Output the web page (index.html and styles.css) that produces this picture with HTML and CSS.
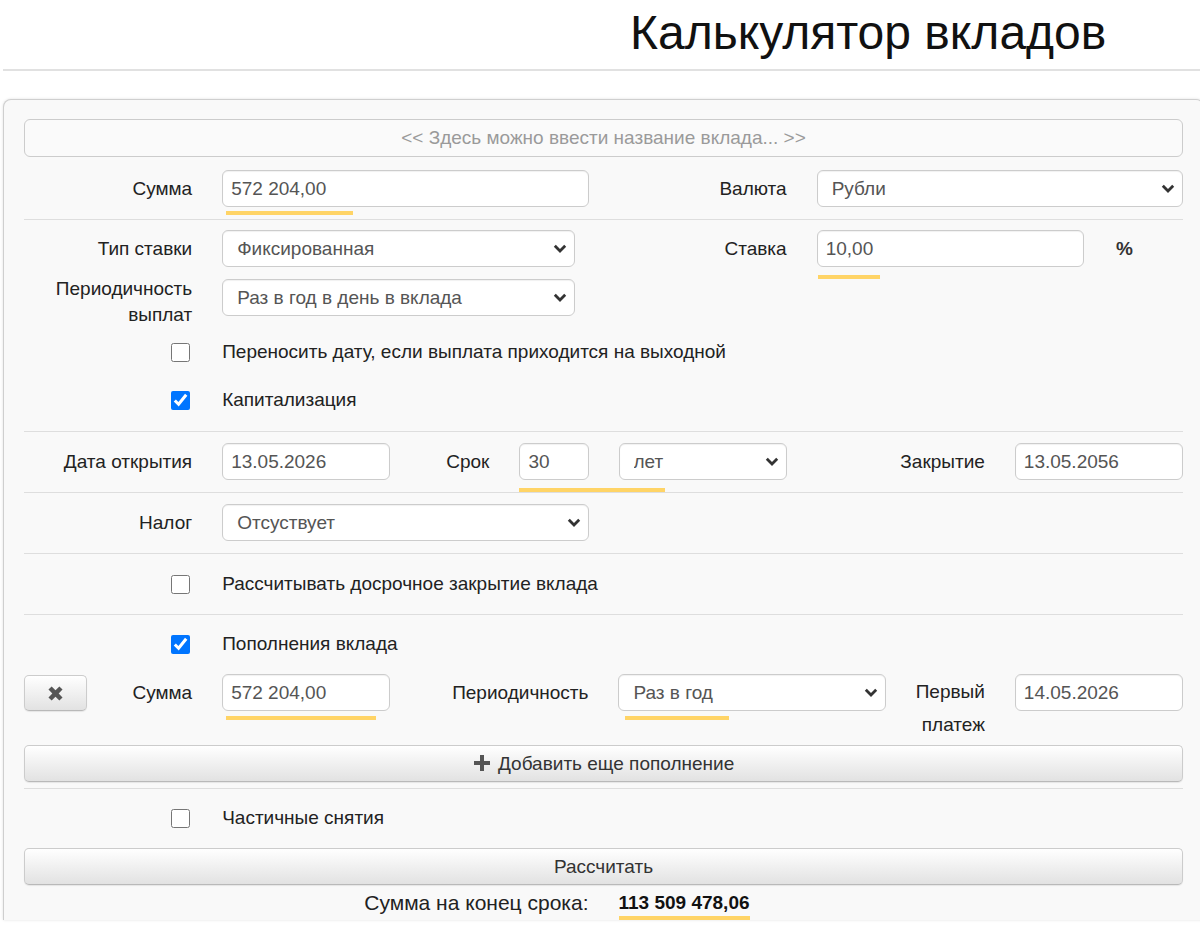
FILE: index.html
```html
<!DOCTYPE html>
<html lang="ru">
<head>
  <meta charset="UTF-8">
  <title>Калькулятор вкладов</title>
  <link rel="stylesheet" href="styles.css">
</head>
<body>
  <h1 class="page-title">Калькулятор вкладов</h1>
  <hr class="title-rule">

  <div class="panel">
    <input class="deposit-name" type="text" placeholder="<< Здесь можно ввести название вклада... >>">

    <!-- сумма и валюта -->
    <div class="section section-first">
      <div class="row">
        <label class="lbl span-2">Сумма</label>
        <div class="field span-4">
          <input class="ctrl" type="text" value="572 204,00">
          <span class="mark mark-sum"></span>
        </div>
        <label class="lbl span-2">Валюта</label>
        <div class="field span-4 select-wrap">
          <select class="ctrl"><option>Рубли</option></select>
          <svg class="chevron" viewBox="0 0 14 9"><path d="M1.8 1.8L7 7l5.2-5.2"/></svg>
        </div>
      </div>
    </div>

    <!-- ставка -->
    <div class="section section-rate">
      <div class="row">
        <label class="lbl span-2">Тип ставки</label>
        <div class="field span-4 select-wrap narrow">
          <select class="ctrl"><option>Фиксированная</option></select>
          <svg class="chevron" viewBox="0 0 14 9"><path d="M1.8 1.8L7 7l5.2-5.2"/></svg>
        </div>
        <label class="lbl span-2">Ставка</label>
        <div class="field span-3">
          <input class="ctrl" type="text" value="10,00">
          <span class="mark mark-rate"></span>
        </div>
        <div class="percent span-1">%</div>
      </div>
      <div class="row row-top row-period">
        <label class="lbl lbl-wrap span-2">Периодичность выплат</label>
        <div class="field span-4 select-wrap narrow">
          <select class="ctrl"><option>Раз в год в день в вклада</option></select>
          <svg class="chevron" viewBox="0 0 14 9"><path d="M1.8 1.8L7 7l5.2-5.2"/></svg>
        </div>
      </div>
      <div class="row check-row">
        <div class="check span-2"><input type="checkbox"></div>
        <div class="check-text span-10">Переносить дату, если выплата приходится на выходной</div>
      </div>
      <div class="row check-row">
        <div class="check span-2"><input type="checkbox" checked></div>
        <div class="check-text span-10">Капитализация</div>
      </div>
    </div>

    <!-- срок -->
    <div class="section">
      <div class="row">
        <label class="lbl span-2">Дата открытия</label>
        <div class="field span-2"><input class="ctrl" type="text" value="13.05.2026"></div>
        <label class="lbl span-1">Срок</label>
        <div class="field span-1">
          <input class="ctrl" type="text" value="30">
          <span class="mark mark-term"></span>
        </div>
        <div class="field span-2 select-wrap">
          <select class="ctrl"><option>лет</option></select>
          <svg class="chevron" viewBox="0 0 14 9"><path d="M1.8 1.8L7 7l5.2-5.2"/></svg>
        </div>
        <label class="lbl span-2">Закрытие</label>
        <div class="field span-2"><input class="ctrl" type="text" value="13.05.2056"></div>
      </div>
    </div>

    <!-- налог -->
    <div class="section">
      <div class="row">
        <label class="lbl span-2">Налог</label>
        <div class="field span-4 select-wrap">
          <select class="ctrl"><option>Отсуствует</option></select>
          <svg class="chevron" viewBox="0 0 14 9"><path d="M1.8 1.8L7 7l5.2-5.2"/></svg>
        </div>
      </div>
    </div>

    <!-- досрочное закрытие -->
    <div class="section section-check">
      <div class="row check-row check-row-tall">
        <div class="check span-2"><input type="checkbox"></div>
        <div class="check-text span-10">Рассчитывать досрочное закрытие вклада</div>
      </div>
    </div>

    <!-- пополнения -->
    <div class="section section-refill">
      <div class="row check-row check-row-head">
        <div class="check span-2"><input type="checkbox" checked></div>
        <div class="check-text span-10">Пополнения вклада</div>
      </div>
      <div class="row row-top row-refill">
        <div class="span-1">
          <button class="btn btn-remove" type="button">
            <svg class="icon-remove" viewBox="0 0 14 14"><path d="M1.2 3.8L3.8 1.2 7 4.4l3.2-3.2 2.6 2.6L9.6 7l3.2 3.2-2.6 2.6L7 9.6l-3.2 3.2-2.6-2.6L4.4 7z"/></svg>
          </button>
        </div>
        <label class="lbl span-1">Сумма</label>
        <div class="field span-2">
          <input class="ctrl" type="text" value="572 204,00">
          <span class="mark mark-refill"></span>
        </div>
        <label class="lbl span-2">Периодичность</label>
        <div class="field span-3 select-wrap">
          <select class="ctrl"><option>Раз в год</option></select>
          <svg class="chevron" viewBox="0 0 14 9"><path d="M1.8 1.8L7 7l5.2-5.2"/></svg>
          <span class="mark mark-period"></span>
        </div>
        <label class="lbl lbl-first span-1">Первый платеж</label>
        <div class="field span-2"><input class="ctrl" type="text" value="14.05.2026"></div>
      </div>
      <button class="btn btn-wide btn-add" type="button">
        <svg class="icon-plus" viewBox="0 0 18 18"><path d="M7 1h4v6h6v4h-6v6H7v-6H1V7h6z"/></svg>
        Добавить еще пополнение
      </button>
    </div>

    <!-- снятия и итог -->
    <div class="section section-last">
      <div class="row check-row check-row-head">
        <div class="check span-2"><input type="checkbox"></div>
        <div class="check-text span-10">Частичные снятия</div>
      </div>
      <button class="btn btn-wide btn-calc" type="button">Рассчитать</button>
      <div class="row result-row">
        <div class="result-label span-6">Сумма на конец срока:</div>
        <div class="result-value span-6"><span class="result-num">113 509 478,06</span></div>
      </div>
    </div>
  </div>
</body>
</html>
```

FILE: styles.css
```css
html, body {
  margin: 0;
  padding: 0;
  background-color: #fff;
  overflow: hidden;
}

body {
  font-family: "Liberation Sans", Arial, sans-serif;
  font-size: 19px;
  color: #222;
  width: 1200px;
  height: 945px;
}

.page-title {
  margin: 0;
  padding: 3px 0 0 630px;
  height: 64px;
  font-size: 48px;
  font-weight: normal;
  line-height: 60px;
  color: #111;
}

.title-rule {
  margin: 2px 0 0 3px;
  height: 0;
  border: none;
  border-top: 2px solid #e1e1e1;
}

.panel {
  margin: 28px 0 0 3px;
  width: 1159px;
  height: 801px;
  padding: 19px 20px 0 20px;
  background-color: #f9f9f9;
  border: 1px solid #cfcfcf;
  border-bottom: none;
  border-radius: 8px 8px 0 0;
  box-shadow: 0 0 3px rgba(0, 0, 0, 0.12);
}

input, select, button {
  font-family: inherit;
  font-size: 19px;
}

.deposit-name {
  display: block;
  box-sizing: border-box;
  width: 100%;
  height: 38px;
  margin: 0;
  border: 1px solid #cccccc;
  border-radius: 6px;
  background-color: #fafafa;
  text-align: center;
  color: #555;
}

.deposit-name::placeholder {
  color: #9a9a9a;
}

/* sections split by thin lines */
.section {
  border-top: 1px solid #dedede;
  padding: 11px 0 12px 0;
}

.section-first {
  border-top: none;
  margin-top: 13px;
  padding-top: 0;
}

.section-rate {
  padding-top: 10px;
  padding-bottom: 7px;
}

.section-check {
  padding: 0;
}

.section-refill {
  padding: 0 0 6px 0;
}

.section-last {
  padding: 0;
}

.row {
  display: grid;
  grid-template-columns: repeat(12, 1fr);
  column-gap: 30px;
  align-items: center;
}

.row-top {
  align-items: start;
}

.row + .row {
  margin-top: 12px;
}

.row.check-row {
  margin-top: 0;
}

.span-1 { grid-column: span 1; }
.span-2 { grid-column: span 2; }
.span-3 { grid-column: span 3; }
.span-4 { grid-column: span 4; }
.span-6 { grid-column: span 6; }
.span-10 { grid-column: span 10; }

.lbl {
  text-align: right;
  line-height: 37px;
  white-space: nowrap;
  color: #222;
}

.lbl-wrap {
  white-space: normal;
  line-height: 26px;
  margin-top: -3px;
}

.lbl-first {
  white-space: normal;
  line-height: 33px;
  margin-top: 1px;
}

.field {
  position: relative;
}

.ctrl {
  display: block;
  box-sizing: border-box;
  width: 100%;
  height: 37px;
  margin: 0;
  padding: 0 8px;
  border: 1px solid #cccccc;
  border-radius: 6px;
  background-color: #fff;
  color: #555;
  box-shadow: inset 0 1px 1px rgba(0, 0, 0, 0.06);
}

select.ctrl {
  appearance: none;
  -webkit-appearance: none;
  padding-left: 14px;
}

.narrow {
  width: 353px;
}

.chevron {
  position: absolute;
  right: 8px;
  top: 14px;
  width: 14px;
  height: 9px;
  fill: none;
  stroke: #333;
  stroke-width: 2.8;
}

.percent {
  padding-left: 2px;
  line-height: 37px;
  font-weight: bold;
  color: #333;
}

/* yellow highlight under values */
.mark {
  position: absolute;
  top: 100%;
  height: 4px;
  background-color: #ffd466;
}

.mark-sum { left: 4px; width: 127px; margin-top: 4px; }
.mark-rate { left: 1px; width: 62px; margin-top: 8px; }
.mark-term { left: 0; width: 146px; margin-top: 8px; }
.mark-refill { left: 4px; width: 150px; margin-top: 5px; }
.mark-period { left: 7px; width: 104px; margin-top: 5px; }

.check-row {
  height: 48px;
}

.check-row-tall {
  height: 60px;
}

.check-row-head {
  height: 58px;
}

.check {
  text-align: right;
  line-height: 0;
}

.check input {
  width: 19px;
  height: 19px;
  margin: 0 2px 0 0;
}

.check-text {
  white-space: nowrap;
}

.row.row-refill {
  margin-top: 1px;
}

/* buttons */
.btn {
  display: block;
  box-sizing: border-box;
  height: 37px;
  margin: 0;
  border: 1px solid #cccccc;
  border-bottom-color: #b9b9b9;
  border-radius: 5px;
  background: linear-gradient(to bottom, #ffffff 0%, #e2e2e2 100%);
  color: #333;
  cursor: pointer;
  box-shadow: 0 1px 1px rgba(0, 0, 0, 0.08);
}

.btn-remove {
  width: 63px;
  height: 36px;
  margin-top: 1px;
}

.icon-remove {
  display: block;
  margin: 0 auto;
  width: 17px;
  height: 17px;
  fill: #555;
}

.btn-wide {
  width: 100%;
}

.btn-add {
  margin-top: 4px;
}

.icon-plus {
  width: 18px;
  height: 18px;
  fill: #555;
  vertical-align: -2px;
  margin-right: 2px;
}

.btn-calc {
  margin-top: 1px;
}

.result-row {
  height: 35px;
}

.row.result-row {
  margin-top: 0;
}

.result-label {
  text-align: right;
  font-size: 21px;
  color: #222;
}

.result-value {
  position: relative;
}

.result-num {
  position: relative;
  display: inline-block;
  font-weight: bold;
  color: #111;
}

.result-num::after {
  content: "";
  position: absolute;
  left: 0;
  right: 0;
  top: 100%;
  margin-top: 2px;
  height: 4px;
  background-color: #ffd466;
}
```
